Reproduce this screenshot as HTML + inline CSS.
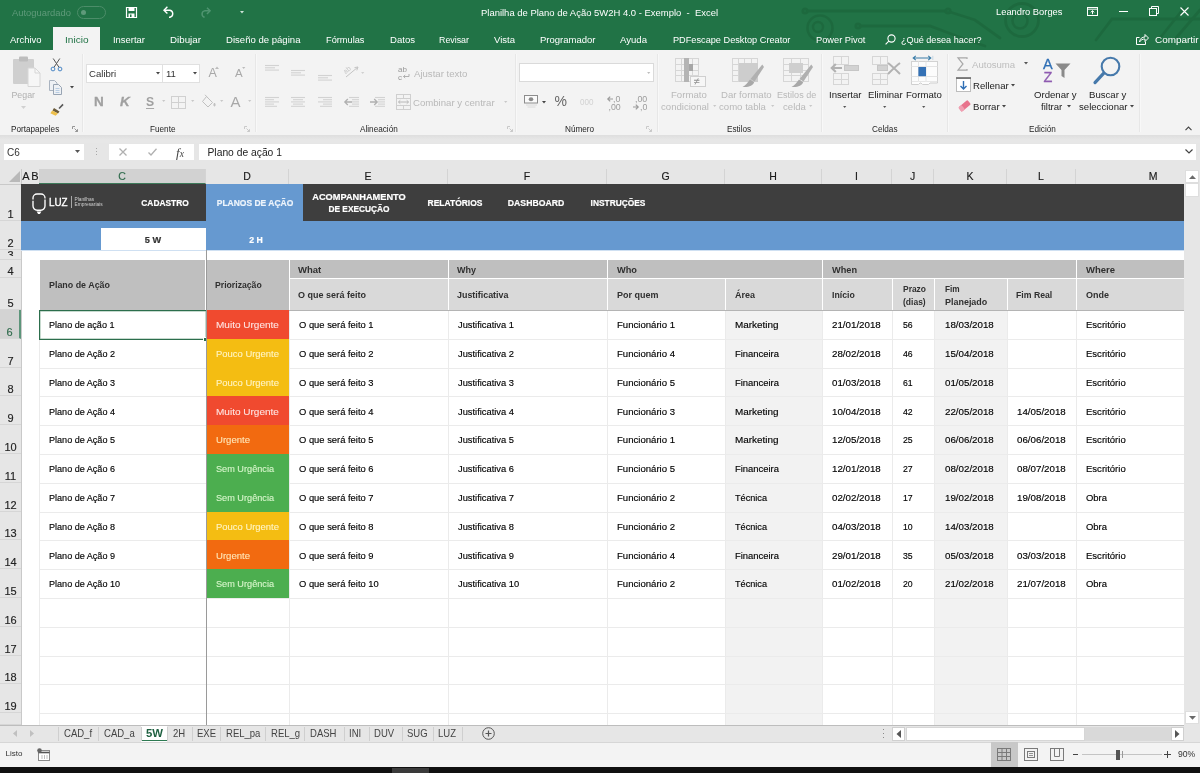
<!DOCTYPE html>
<html><head><meta charset="utf-8"><title>Excel</title>
<style>
*{box-sizing:border-box;margin:0;padding:0}
html,body{width:1200px;height:773px;overflow:hidden;background:#e6e6e6;font-family:"Liberation Sans",sans-serif;}
.a{position:absolute;white-space:nowrap;line-height:1}
svg{position:absolute;overflow:visible}
#title{left:0;top:0;width:1200px;height:50px;background:#217346}
#ribbon{left:0;top:50px;width:1200px;height:85px;background:#f3f3f3}
#shadow{left:0;top:135px;width:1200px;height:8px;background:linear-gradient(#dedede,#e7e7e7 60%)}
.rt{font-size:9.6px;color:#fff;top:35px}
.gl{font-size:8.2px;color:#262626;top:124px;margin-top:1.8px}
.rl{font-size:9.2px;color:#333}
.dis{color:#b9b9b9}
.sep{position:absolute;top:54px;width:1px;height:78px;background:#e7e7e7;box-shadow:1px 0 0 #f8f8f8}
.cell{position:absolute;font-size:9.5px;color:#000;-webkit-text-stroke:0.15px #000;white-space:nowrap;line-height:1;transform-origin:0 0}
.hb{position:absolute;font-size:9.6px;font-weight:bold;color:#303030;white-space:nowrap;line-height:1.3;transform-origin:0 0}
.ch{position:absolute;top:169px;height:15px;font-size:10.5px;color:#1a1a1a;-webkit-text-stroke:0.15px #1a1a1a;text-align:center;line-height:15px;border-right:1px solid #d4d4d4}
.rh{position:absolute;left:0;width:21px;font-size:11px;color:#222;-webkit-text-stroke:0.15px #222;text-align:center;border-bottom:1px solid #d6d6d6;line-height:1}
.nav{position:absolute;font-size:9.3px;font-weight:bold;color:#fff;-webkit-text-stroke:0.2px currentColor;white-space:nowrap;line-height:1.25;text-align:center}
.tab{position:absolute;top:728.7px;font-size:10.3px;color:#444;white-space:nowrap;line-height:1;transform-origin:0 0}
.tsep{position:absolute;top:727px;width:1px;height:14px;background:#cfcfcf}
.box{position:absolute}
</style></head><body><div id="root" style="position:absolute;left:0;top:0;width:1200px;height:773px;will-change:transform">

<div class="a" id="title"></div>
<svg style="left:0;top:0" width="1200" height="50" viewBox="0 0 1200 50" fill="none" stroke="#1d693e" stroke-width="2.8" stroke-linecap="round" opacity="0.9">
<circle cx="805" cy="11" r="2.2"/><path d="M808 11 H946"/><circle cx="948" cy="11" r="2.2"/><path d="M950 12 L975 20 L1000 38"/>
<circle cx="820" cy="28" r="12.5" stroke-width="2.6"/><circle cx="818" cy="27" r="5" stroke-width="2.4"/>
<circle cx="858" cy="26" r="2.2"/><path d="M861 26 H930 L962 38 L985 46"/>
<circle cx="1022" cy="20" r="16.5" stroke-width="2.8"/><circle cx="1020" cy="21" r="7.5" stroke-width="2.6"/>
<path d="M1096 40 L1112 19 H1200"/><path d="M1160 38 L1184 8"/><path d="M1176 38 L1200 10"/>
</svg>
<div class="a " style="left:12px;top:7.5px;font-size:9.4px;color:#5f9a7a">Autoguardado</div>
<div class="box" style="left:77px;top:6px;width:29px;height:13px;border:1px solid #4c8d69;border-radius:7px"></div>
<div class="box" style="left:81px;top:10px;width:5px;height:5px;border-radius:3px;background:#5f9a7a"></div>
<svg style="left:126px;top:7px" width="11" height="11" viewBox="0 0 11 11"><path d="M0.5 0.5 H10.5 V10.5 H0.5 Z" fill="none" stroke="#fff" stroke-width="1.2"/><rect x="2.5" y="0.5" width="6" height="3.5" fill="#fff"/><rect x="2.5" y="6.5" width="6" height="4" fill="#fff"/><rect x="4" y="7.5" width="1.5" height="2.5" fill="#217346"/></svg>
<svg style="left:163px;top:6px" width="12" height="12" viewBox="0 0 12 12" fill="none" stroke="#fff" stroke-width="1.4"><path d="M1 4.2 H7 A3.6 3.6 0 0 1 7 11.2 H6"/><path d="M4.4 0.8 L1 4.2 L4.4 7.6"/></svg>
<svg style="left:200px;top:7px" width="11" height="11" viewBox="0 0 12 12" fill="none" stroke="#4f9470" stroke-width="1.6"><path d="M11 4.2 H5 A3.6 3.6 0 0 0 5 11.2"/><path d="M7.6 0.8 L11 4.2 L7.6 7.6"/></svg>
<svg style="left:240px;top:11px" width="4" height="3" viewBox="0 0 4 3"><path d="M0 0 H4 L2 2.6 Z" fill="#cfe3d8"/></svg>
<div class="a " style="left:481px;top:8.5px;font-size:9.3px;color:#fff;transform-origin:0 0;transform:scaleX(1.017)">Planilha de Plano de Ação 5W2H 4.0 - Exemplo &nbsp;- &nbsp;Excel</div>
<div class="a " style="left:996px;top:7px;font-size:9.6px;color:#fff;transform-origin:0 0;transform:scaleX(0.973)">Leandro Borges</div>
<svg style="left:1087px;top:7px" width="11" height="9" viewBox="0 0 11 9" fill="none" stroke="#fff" stroke-width="1"><rect x="0.5" y="0.5" width="10" height="8"/><path d="M5.5 7.2 V3.8 M3.7 5.4 L5.5 3.7 L7.3 5.4" /><path d="M0.5 2.2 H10.5"/></svg>
<div class="box" style="left:1119px;top:11px;width:9px;height:1px;background:#fff;"></div>
<svg style="left:1149px;top:6px" width="10" height="10" viewBox="0 0 10 10" fill="none" stroke="#fff" stroke-width="1"><rect x="0.5" y="2.5" width="7" height="7"/><path d="M2.5 2.5 V0.5 H9.5 V7.5 H7.5"/></svg>
<svg style="left:1180px;top:7px" width="9" height="9" viewBox="0 0 9 9" fill="none" stroke="#fff" stroke-width="1.1"><path d="M0.5 0.5 L8.5 8.5 M8.5 0.5 L0.5 8.5"/></svg>
<div class="box" style="left:53px;top:27px;width:47px;height:23px;background:#f3f3f3;"></div>
<div class="a rt" style="left:10px;top:35px;transform-origin:0 0;transform:scaleX(0.984)">Archivo</div>
<div class="a rt" style="left:113px;top:35px;transform-origin:0 0;transform:scaleX(0.983)">Insertar</div>
<div class="a rt" style="left:170px;top:35px;transform-origin:0 0;transform:scaleX(1.019)">Dibujar</div>
<div class="a rt" style="left:226px;top:35px;transform-origin:0 0;transform:scaleX(0.997)">Diseño de página</div>
<div class="a rt" style="left:326px;top:35px;transform-origin:0 0;transform:scaleX(0.962)">Fórmulas</div>
<div class="a rt" style="left:389.5px;top:35px;transform-origin:0 0;transform:scaleX(0.997)">Datos</div>
<div class="a rt" style="left:439px;top:35px;transform-origin:0 0;transform:scaleX(0.922)">Revisar</div>
<div class="a rt" style="left:494px;top:35px;transform-origin:0 0;transform:scaleX(0.992)">Vista</div>
<div class="a rt" style="left:539.5px;top:35px;transform-origin:0 0;transform:scaleX(0.991)">Programador</div>
<div class="a rt" style="left:620px;top:35px;transform-origin:0 0;transform:scaleX(0.998)">Ayuda</div>
<div class="a rt" style="left:672.5px;top:35px;transform-origin:0 0;transform:scaleX(0.957)">PDFescape Desktop Creator</div>
<div class="a rt" style="left:815.5px;top:35px;transform-origin:0 0;transform:scaleX(0.966)">Power Pivot</div>
<div class="a rt" style="left:900.5px;top:35px;transform-origin:0 0;transform:scaleX(0.949)">¿Qué desea hacer?</div>
<div class="a rt" style="left:1154.5px;top:35px;transform-origin:0 0;transform:scaleX(1.032)">Compartir</div>
<div class="a " style="left:65px;top:35px;font-size:9.6px;color:#217346;transform-origin:0 0;transform:scaleX(1.049)">Inicio</div>
<svg style="left:885px;top:34px" width="11" height="11" viewBox="0 0 11 11" fill="none" stroke="#fff" stroke-width="1.1"><circle cx="6.5" cy="4.5" r="3.6"/><path d="M3.8 7.2 L0.6 10.4"/></svg>
<svg style="left:1136px;top:33px" width="13" height="12" viewBox="0 0 13 12" fill="none" stroke="#fff" stroke-width="1"><path d="M3.5 4.5 H0.5 V11.5 H9.5 V8.5"/><path d="M3.5 9 C4 5.5 6 4 9 4 V1.5 L12.5 5 L9 8.5 V6 C6.5 6 5 6.8 3.5 9 Z"/></svg>
<div class="a" id="ribbon"></div><div class="a" id="shadow"></div>
<div class="sep" style="left:82px"></div>
<div class="sep" style="left:255px"></div>
<div class="sep" style="left:515px"></div>
<div class="sep" style="left:657px"></div>
<div class="sep" style="left:821px"></div>
<div class="sep" style="left:947px"></div>
<div class="sep" style="left:1139px"></div>
<div class="a gl" style="left:11px;top:124px;">Portapapeles</div>
<div class="a gl" style="left:150px;top:124px;">Fuente</div>
<div class="a gl" style="left:360px;top:124px;">Alineación</div>
<div class="a gl" style="left:565px;top:124px;">Número</div>
<div class="a gl" style="left:727px;top:124px;">Estilos</div>
<div class="a gl" style="left:872px;top:124px;">Celdas</div>
<div class="a gl" style="left:1029px;top:124px;">Edición</div>
<svg style="left:12px;top:56px" width="29" height="31" viewBox="0 0 29 31"><rect x="1" y="3" width="21" height="25" rx="1" fill="#cfcfcf"/><rect x="7" y="0.5" width="9" height="5" rx="1" fill="#bdbdbd"/><path d="M16 12 H23 L28 17 V30.5 H16 Z" fill="#f6f6f6" stroke="#d6d6d6"/><path d="M23 12 V17 H28" fill="none" stroke="#d6d6d6"/></svg>
<div class="a rl dis" style="left:11.5px;top:91px;font-size:8.8px;color:#b0b0b0">Pegar</div>
<svg style="left:21px;top:106px" width="5" height="3" viewBox="0 0 5 3"><path d="M0 0H5L2.5 3Z" fill="#d0d0d0"/></svg>
<svg style="left:50px;top:58px" width="13" height="14" viewBox="0 0 13 14" fill="none"><path d="M3.2 0.5 L9 9.3 M9.8 0.5 L4 9.3" stroke="#555" stroke-width="1"/><circle cx="3" cy="11" r="1.9" stroke="#4a86c5" stroke-width="1"/><circle cx="10" cy="11" r="1.9" stroke="#4a86c5" stroke-width="1"/></svg>
<svg style="left:49px;top:80px" width="13" height="15" viewBox="0 0 13 15" fill="none"><path d="M0.5 0.5 H5.5 L8 3 V10.5 H0.5 Z" fill="#eef1f5" stroke="#a9b3c0"/><path d="M4.5 4.5 H9.5 L12.5 7.5 V14.5 H4.5 Z" fill="#eef1f5" stroke="#98a4b3"/><path d="M6.5 8.5H10.5M6.5 10.5H10.5M6.5 12.5H10.5" stroke="#b9cde3"/></svg>
<svg style="left:70px;top:86px" width="4" height="3" viewBox="0 0 4 3"><path d="M0 0H4L2 2.5Z" fill="#444"/></svg>
<svg style="left:50px;top:103px" width="14" height="13" viewBox="0 0 14 13"><path d="M8.5 5 L12.5 0.8 L13.6 2 L9.6 6 Z" fill="#555"/><path d="M4 5 L9.5 8.5 L8 10.5 L2.5 7.5 Z" fill="#6a5a3a"/><path d="M2.2 7.4 L8 10.6 L5.6 12.8 L0.4 10.2 Z" fill="#edbf4a"/></svg>
<svg style="left:72px;top:126px" width="6" height="6" viewBox="0 0 6 6" fill="none" stroke="#8a8a8a" stroke-width="0.9"><path d="M0.5 3V0.5H3"/><path d="M2.5 2.5L5.5 5.5M5.5 3.2V5.5H3.2"/></svg>
<div class="box" style="left:86px;top:64px;width:77px;height:19px;background:#fff;border:1px solid #e0e0e0"></div>
<div class="box" style="left:162px;top:64px;width:38px;height:19px;background:#fff;border:1px solid #e0e0e0"></div>
<div class="a " style="left:89px;top:69px;font-size:9.6px;color:#333">Calibri</div>
<div class="a " style="left:166px;top:69px;font-size:9.6px;color:#333">11</div>
<svg style="left:156px;top:72px" width="4" height="3" viewBox="0 0 4 3"><path d="M0 0H4L2 2.6Z" fill="#444"/></svg>
<svg style="left:193px;top:72px" width="4" height="3" viewBox="0 0 4 3"><path d="M0 0H4L2 2.6Z" fill="#444"/></svg>
<div class="a " style="left:208.5px;top:67px;font-size:12.5px;color:#a8a8a8">A</div>
<div class="a " style="left:235px;top:68.3px;font-size:11.5px;color:#a8a8a8">A</div>
<svg style="left:215px;top:66px" width="4" height="3" viewBox="0 0 4 3"><path d="M0 3H4L2 0.4Z" fill="#bbb"/></svg>
<svg style="left:242px;top:67px" width="3.4" height="2.4" viewBox="0 0 4 3"><path d="M0 0H4L2 2.6Z" fill="#bbb"/></svg>
<div class="a " style="left:94px;top:94.5px;font-size:13.5px;font-weight:bold;color:#a0a0a0;-webkit-text-stroke:0.3px #a0a0a0">N</div>
<div class="a " style="left:120px;top:94.5px;font-size:13.5px;font-weight:bold;font-style:italic;color:#a0a0a0;-webkit-text-stroke:0.3px #a0a0a0">K</div>
<div class="a " style="left:146px;top:94.5px;font-size:13.5px;font-weight:bold;color:#a0a0a0;border-bottom:1.5px solid #a8a8a8;padding-bottom:0px;height:14.5px;transform:scaleX(0.9);transform-origin:0 0">S</div>
<svg style="left:162px;top:100px" width="3.4" height="2.4" viewBox="0 0 4 3"><path d="M0 0H4L2 2.6Z" fill="#c8c8c8"/></svg>
<svg style="left:191px;top:100px" width="3.4" height="2.4" viewBox="0 0 4 3"><path d="M0 0H4L2 2.6Z" fill="#c8c8c8"/></svg>
<svg style="left:220px;top:100px" width="3.4" height="2.4" viewBox="0 0 4 3"><path d="M0 0H4L2 2.6Z" fill="#c8c8c8"/></svg>
<svg style="left:248px;top:100px" width="3.4" height="2.4" viewBox="0 0 4 3"><path d="M0 0H4L2 2.6Z" fill="#c8c8c8"/></svg>
<svg style="left:171px;top:96px" width="15" height="13" viewBox="0 0 15 13" fill="none" stroke="#d0d0d0"><rect x="0.5" y="0.5" width="14" height="12"/><path d="M7.5 0.5V12.5M0.5 6.5H14.5"/></svg>
<svg style="left:201px;top:94px" width="15" height="15" viewBox="0 0 15 15" fill="none" stroke="#c0c0c0"><path d="M5.5 2.5 L11.5 8.5 L7 13 L1.5 7.5 Z"/><path d="M4 0.8 L7.5 4.5"/><path d="M13.5 9 C12.5 10.8 12.8 12 13.5 12 C14.2 12 14.5 10.8 13.5 9Z" fill="#c8c8c8"/></svg>
<div class="a " style="left:230.5px;top:93.5px;font-size:15px;color:#a8a8a8">A</div>
<svg style="left:124px;top:126px" width="6" height="6" viewBox="0 0 6 6" fill="none" stroke="#c4c4c4" stroke-width="0.9" transform="translate(120 0)"><path d="M0.5 3V0.5H3"/><path d="M2.5 2.5L5.5 5.5M5.5 3.2V5.5H3.2"/></svg>
<svg style="left:265px;top:65px" width="14" height="7" viewBox="0 0 14 7" stroke="#d2d2d2" stroke-width="1.1"><path d="M0 0.5 H14"/><path d="M0 2.8 H10"/><path d="M0 5.1 H14"/></svg>
<svg style="left:291px;top:70px" width="14" height="7" viewBox="0 0 14 7" stroke="#d2d2d2" stroke-width="1.1"><path d="M0 0.5 H14"/><path d="M0 2.8 H10"/><path d="M0 5.1 H14"/></svg>
<svg style="left:318px;top:75px" width="14" height="7" viewBox="0 0 14 7" stroke="#d2d2d2" stroke-width="1.1"><path d="M0 0.5 H14"/><path d="M0 2.8 H10"/><path d="M0 5.1 H14"/></svg>
<svg style="left:344px;top:63px" width="16" height="16" viewBox="0 0 16 16" fill="none" stroke="#c4c4c4" stroke-width="1"><path d="M2 14 L14 4 M14 4 L10.5 4.6 M14 4 L12.8 7.4"/><text x="0" y="9" font-family="Liberation Sans" font-size="7" fill="#c4c4c4" stroke="none" transform="rotate(-40 4 8)">ab</text></svg>
<svg style="left:361px;top:72px" width="3.4" height="2.4" viewBox="0 0 4 3"><path d="M0 0H4L2 2.6Z" fill="#d0d0d0"/></svg>
<svg style="left:398px;top:66px" width="12" height="14" viewBox="0 0 12 14"><text x="0" y="6" font-family="Liberation Sans" font-size="8" fill="#989898">ab</text><text x="0" y="13.5" font-family="Liberation Sans" font-size="8" fill="#989898">c</text><path d="M11 8 V10.5 H5.5 M7.2 9 L5.5 10.5 L7.2 12" fill="none" stroke="#a8a8a8" stroke-width="0.9"/></svg>
<div class="a rl dis" style="left:414px;top:69px;font-size:9.6px">Ajustar texto</div>
<svg style="left:265px;top:97px" width="14" height="12" viewBox="0 0 14 12" stroke="#d2d2d2" stroke-width="1.1"><path d="M0 0.5 H14"/><path d="M0 2.7 H9"/><path d="M0 4.9 H14"/><path d="M0 7.1000000000000005 H9"/><path d="M0 9.3 H12"/></svg>
<svg style="left:291px;top:97px" width="14" height="12" viewBox="0 0 14 12" stroke="#d2d2d2" stroke-width="1.1"><path d="M0.0 0.5 H14.0"/><path d="M2.0 2.7 H12.0"/><path d="M0.0 4.9 H14.0"/><path d="M2.0 7.1000000000000005 H12.0"/><path d="M0.0 9.3 H14.0"/></svg>
<svg style="left:318px;top:97px" width="14" height="12" viewBox="0 0 14 12" stroke="#d2d2d2" stroke-width="1.1"><path d="M0 0.5 H14"/><path d="M5 2.7 H14"/><path d="M0 4.9 H14"/><path d="M5 7.1000000000000005 H14"/><path d="M2 9.3 H14"/></svg>
<svg style="left:349px;top:97px" width="10" height="12" viewBox="0 0 10 12" stroke="#d2d2d2" stroke-width="1.1"><path d="M0 0.5 H10"/><path d="M3 2.7 H10"/><path d="M3 4.9 H10"/><path d="M3 7.1000000000000005 H10"/><path d="M0 9.3 H10"/></svg>
<svg style="left:344px;top:98px" width="8" height="8" viewBox="0 0 8 8" fill="none" stroke="#b0b0b0" stroke-width="1.3"><path d="M8 4H1M3.8 1L0.8 4L3.8 7"/></svg>
<svg style="left:375px;top:97px" width="10" height="12" viewBox="0 0 10 12" stroke="#d2d2d2" stroke-width="1.1"><path d="M0 0.5 H10"/><path d="M3 2.7 H10"/><path d="M3 4.9 H10"/><path d="M3 7.1000000000000005 H10"/><path d="M0 9.3 H10"/></svg>
<svg style="left:370px;top:98px" width="8" height="8" viewBox="0 0 8 8" fill="none" stroke="#b0b0b0" stroke-width="1.3"><path d="M0 4H7M4.2 1L7.2 4L4.2 7"/></svg>
<svg style="left:396px;top:94px" width="15" height="16" viewBox="0 0 15 16" fill="none" stroke="#cfcfcf"><rect x="0.5" y="0.5" width="14" height="15"/><path d="M0.5 4.5H14.5M0.5 11.5H14.5M7.5 0.5V4.5M7.5 11.5V15.5"/><path d="M2.5 8H12.5M4.3 6.3L2.5 8L4.3 9.7M10.7 6.3L12.5 8L10.7 9.7" stroke="#b8b8b8"/></svg>
<div class="a rl dis" style="left:413px;top:98px;font-size:9.6px">Combinar y centrar</div>
<svg style="left:504px;top:101px" width="3.4" height="2.4" viewBox="0 0 4 3"><path d="M0 0H4L2 2.6Z" fill="#c8c8c8"/></svg>
<svg style="left:507px;top:126px" width="6" height="6" viewBox="0 0 6 6" fill="none" stroke="#c4c4c4" stroke-width="0.9"><path d="M0.5 3V0.5H3"/><path d="M2.5 2.5L5.5 5.5M5.5 3.2V5.5H3.2"/></svg>
<div class="box" style="left:519px;top:63px;width:135px;height:19px;background:#fff;border:1px solid #dadada"></div>
<svg style="left:647px;top:72px" width="3.4" height="2.4" viewBox="0 0 4 3"><path d="M0 0H4L2 2.6Z" fill="#bdbdbd"/></svg>
<svg style="left:524px;top:95px" width="15" height="13" viewBox="0 0 15 13"><rect x="0.5" y="0.5" width="13" height="7.5" fill="#fafafa" stroke="#8c8c8c"/><ellipse cx="7" cy="4.2" rx="2.3" ry="2" fill="#8a8a8a"/><path d="M2 10H13M3.5 12H11.5" stroke="#dadada"/></svg>
<svg style="left:542px;top:101px" width="4" height="3" viewBox="0 0 4 3"><path d="M0 0H4L2 2.6Z" fill="#444"/></svg>
<div class="a " style="left:554.5px;top:94px;font-size:14px;color:#666">%</div>
<div class="a " style="left:580px;top:97px;font-size:9.5px;color:#d2d2d2;transform:scaleX(0.85);transform-origin:0 0">000</div>
<svg style="left:607px;top:96px" width="6" height="6" viewBox="0 0 6 6" fill="none" stroke="#9c9c9c" stroke-width="1.2"><path d="M6 3H1M3.2 0.6L0.8 3L3.2 5.4"/></svg>
<div class="a " style="left:613px;top:94.5px;font-size:8.8px;color:#9c9c9c">,0</div>
<div class="a " style="left:608.5px;top:102.5px;font-size:8.8px;color:#9c9c9c">,00</div>
<div class="a " style="left:635px;top:94.5px;font-size:8.8px;color:#9c9c9c">,00</div>
<svg style="left:633px;top:104px" width="6" height="6" viewBox="0 0 6 6" fill="none" stroke="#9c9c9c" stroke-width="1.2"><path d="M0 3H5M2.8 0.6L5.2 3L2.8 5.4"/></svg>
<div class="a " style="left:640px;top:102.5px;font-size:8.8px;color:#9c9c9c">,0</div>
<svg style="left:646px;top:126px" width="6" height="6" viewBox="0 0 6 6" fill="none" stroke="#c4c4c4" stroke-width="0.9"><path d="M0.5 3V0.5H3"/><path d="M2.5 2.5L5.5 5.5M5.5 3.2V5.5H3.2"/></svg>
<svg style="left:675px;top:58px" width="24" height="24" viewBox="0 0 24 24" fill="none" stroke="#d6d6d6"><rect x="0.5" y="0.5" width="23" height="23" fill="none"/><path d="M6.5 0.5V23.5"/><path d="M12.5 0.5V23.5"/><path d="M17.5 0.5V23.5"/><path d="M0.5 6.5H23.5"/><path d="M0.5 12.5H23.5"/><path d="M0.5 17.5H23.5"/></svg>
<div class="box" style="left:684px;top:58px;width:5px;height:24px;background:#b4b4b4;"></div>
<div class="box" style="left:689px;top:64px;width:4px;height:7px;background:#a6a6a6;"></div>
<div class="box" style="left:690px;top:76px;width:16px;height:11px;background:#f6f6f6;border:1px solid #cfcfcf"></div>
<div class="a " style="left:693.5px;top:75.5px;font-size:11px;color:#8f8f8f">≠</div>
<div class="a rl dis" style="left:671px;top:90px;font-size:9.6px">Formato</div>
<div class="a rl dis" style="left:661px;top:102px;font-size:9.6px">condicional</div>
<svg style="left:713px;top:105px" width="3.4" height="2.4" viewBox="0 0 4 3"><path d="M0 0H4L2 2.6Z" fill="#c8c8c8"/></svg>
<svg style="left:732px;top:58px" width="26" height="24" viewBox="0 0 26 24" fill="none" stroke="#d6d6d6"><rect x="0.5" y="0.5" width="25" height="23" fill="none"/><path d="M6.5 0.5V23.5"/><path d="M12.5 0.5V23.5"/><path d="M19.5 0.5V23.5"/><path d="M0.5 6.5H25.5"/><path d="M0.5 12.5H25.5"/><path d="M0.5 17.5H25.5"/></svg>
<div class="box" style="left:739px;top:63px;width:19px;height:19px;background:#cdcdcd;"></div>
<svg style="left:742px;top:64px" width="22" height="24" viewBox="0 0 22 24"><path d="M20.3 0.5 L22 3 L12.5 17.5 L8.5 15 Z" fill="#b0b0b0"/><path d="M8 15.5 L12.2 18.2 C11 21.5 7 23.5 0.5 23 C4 21 5.5 19 8 15.5Z" fill="#a8a8a8"/></svg>
<div class="a rl dis" style="left:721px;top:90px;font-size:9.6px">Dar formato</div>
<div class="a rl dis" style="left:719px;top:102px;font-size:9.6px">como tabla</div>
<svg style="left:771px;top:105px" width="3.4" height="2.4" viewBox="0 0 4 3"><path d="M0 0H4L2 2.6Z" fill="#c8c8c8"/></svg>
<svg style="left:783px;top:58px" width="26" height="24" viewBox="0 0 26 24" fill="none" stroke="#d6d6d6"><rect x="0.5" y="0.5" width="25" height="23" fill="none"/><path d="M8.5 0.5V23.5"/><path d="M17.5 0.5V23.5"/><path d="M0.5 6.5H25.5"/><path d="M0.5 12.5H25.5"/><path d="M0.5 17.5H25.5"/></svg>
<div class="box" style="left:789px;top:63px;width:14px;height:10px;background:#cfcfcf;"></div>
<svg style="left:791px;top:64px" width="22" height="24" viewBox="0 0 22 24"><path d="M20.3 0.5 L22 3 L12.5 17.5 L8.5 15 Z" fill="#b0b0b0"/><path d="M8 15.5 L12.2 18.2 C11 21.5 7 23.5 0.5 23 C4 21 5.5 19 8 15.5Z" fill="#a8a8a8"/></svg>
<div class="a rl dis" style="left:777px;top:90px;font-size:9.6px;transform-origin:0 0;transform:scaleX(0.944)">Estilos de</div>
<div class="a rl dis" style="left:783px;top:102px;font-size:9.6px">celda</div>
<svg style="left:809px;top:105px" width="3.4" height="2.4" viewBox="0 0 4 3"><path d="M0 0H4L2 2.6Z" fill="#c8c8c8"/></svg>
<svg style="left:833px;top:56px" width="16" height="9" viewBox="0 0 16 9" fill="none" stroke="#d6d6d6"><rect x="0.5" y="0.5" width="15" height="8" fill="none"/><path d="M8.5 0.5V8.5"/></svg>
<svg style="left:833px;top:73px" width="16" height="12" viewBox="0 0 16 12" fill="none" stroke="#d6d6d6"><rect x="0.5" y="0.5" width="15" height="11" fill="none"/><path d="M8.5 0.5V11.5"/><path d="M0.5 6.5H15.5"/></svg>
<div class="box" style="left:844px;top:65px;width:15px;height:6px;background:#d2d2d2;border:1px solid #c6c6c6"></div>
<svg style="left:830px;top:63px" width="14" height="10" viewBox="0 0 14 10" fill="none" stroke="#b2b2b2" stroke-width="2.2"><path d="M12 5H2M5.8 1L1.8 5L5.8 9"/></svg>
<div class="a rl" style="left:829px;top:90px;font-size:9.6px;color:#222">Insertar</div>
<svg style="left:843.3px;top:106px" width="3.4" height="2.4" viewBox="0 0 4 3"><path d="M0 0H4L2 2.6Z" fill="#555"/></svg>
<svg style="left:872px;top:56px" width="16" height="9" viewBox="0 0 16 9" fill="none" stroke="#d6d6d6"><rect x="0.5" y="0.5" width="15" height="8" fill="none"/><path d="M8.5 0.5V8.5"/></svg>
<svg style="left:872px;top:73px" width="16" height="12" viewBox="0 0 16 12" fill="none" stroke="#d6d6d6"><rect x="0.5" y="0.5" width="15" height="11" fill="none"/><path d="M8.5 0.5V11.5"/><path d="M0.5 6.5H15.5"/></svg>
<div class="box" style="left:877px;top:65px;width:11px;height:6px;background:#d2d2d2;border:1px solid #c6c6c6"></div>
<svg style="left:887px;top:62px" width="14" height="13" viewBox="0 0 14 13" fill="none" stroke="#b2b2b2" stroke-width="2"><path d="M1 1C5 4 9 8 13 12M13 1C9 4 5 8 1 12"/></svg>
<div class="a rl" style="left:868px;top:90px;font-size:9.6px;color:#222">Eliminar</div>
<svg style="left:883.3px;top:106px" width="3.4" height="2.4" viewBox="0 0 4 3"><path d="M0 0H4L2 2.6Z" fill="#555"/></svg>
<svg style="left:911px;top:55px" width="28" height="31" viewBox="0 0 28 31" fill="none"><path d="M2.2 3H19.8M4.8 0.9L2.2 3L4.8 5.1M17.2 0.9L19.8 3L17.2 5.1" stroke="#3a7ca8" stroke-width="1.1"/><path d="M21.8 0.8V5" stroke="#b9cfe0" stroke-width="0.8"/><rect x="0.5" y="6.5" width="26" height="20" fill="#fcfcfc" stroke="#d2d2d2"/><path d="M7.5 6.5V26.5M15 6.5V26.5M0.5 11.5H26.5M0.5 21.5H26.5" stroke="#e4e4e4"/><rect x="7.4" y="12" width="7.6" height="9.2" fill="#3471b5"/><path d="M0.5 26.5 V29.5 H7.5 L9 28 H10 L11.5 29.5 H17.5 L19 28 H26.5 V26.5" stroke="#cfcfcf" fill="#fcfcfc"/></svg>
<div class="a rl" style="left:906px;top:90px;font-size:9.6px;color:#222">Formato</div>
<svg style="left:922.3px;top:106px" width="3.4" height="2.4" viewBox="0 0 4 3"><path d="M0 0H4L2 2.6Z" fill="#555"/></svg>
<svg style="left:957px;top:57px" width="11" height="14" viewBox="0 0 11 14" fill="none" stroke="#a8a8a8" stroke-width="1.2"><path d="M10 2V0.8H1L6 7L1 13.2H10V12"/></svg>
<div class="a rl" style="left:972px;top:59.7px;font-size:9.6px;color:#bdbdbd">Autosuma</div>
<svg style="left:1024px;top:62px" width="4" height="3" viewBox="0 0 4 3"><path d="M0 0H4L2 2.6Z" fill="#555"/></svg>
<svg style="left:956px;top:77px" width="15" height="15" viewBox="0 0 15 15" fill="none"><rect x="0.5" y="1.5" width="14" height="13" fill="#fff" stroke="#bdbdbd"/><path d="M0 1H15" stroke="#666" stroke-width="1.6"/><path d="M7.5 4V12M4.5 9L7.5 12L10.5 9" stroke="#2f6fb5" stroke-width="1.4"/></svg>
<div class="a rl" style="left:973px;top:81px;font-size:9.6px;color:#222">Rellenar</div>
<svg style="left:1011px;top:84px" width="4" height="3" viewBox="0 0 4 3"><path d="M0 0H4L2 2.6Z" fill="#444"/></svg>
<svg style="left:957px;top:99px" width="14" height="13" viewBox="0 0 14 13"><g transform="translate(1.2 8.6) rotate(-40)"><rect x="0" y="0" width="12" height="5.6" rx="1.3" fill="#e8738c"/><rect x="0" y="0" width="4.2" height="5.6" rx="1.3" fill="#f0a0b2"/></g></svg>
<div class="a rl" style="left:973px;top:102px;font-size:9.6px;color:#222">Borrar</div>
<svg style="left:1002px;top:105px" width="4" height="3" viewBox="0 0 4 3"><path d="M0 0H4L2 2.6Z" fill="#444"/></svg>
<div class="a " style="left:1043px;top:56.5px;font-size:14.5px;color:#2f6fb5;-webkit-text-stroke:0.3px #2f6fb5">A</div>
<div class="a " style="left:1043.5px;top:69.5px;font-size:14.5px;color:#8e5bb0;-webkit-text-stroke:0.3px #8e5bb0">Z</div>
<svg style="left:1055px;top:63px" width="16" height="16" viewBox="0 0 16 16"><path d="M0.5 0.5H15.5L9.5 7V15L6.5 13V7Z" fill="#8a8a8a"/></svg>
<div class="a rl" style="left:1034px;top:90px;font-size:9.6px;color:#222">Ordenar y</div>
<div class="a rl" style="left:1041px;top:102px;font-size:9.6px;color:#222">filtrar</div>
<svg style="left:1067px;top:105px" width="4" height="3" viewBox="0 0 4 3"><path d="M0 0H4L2 2.6Z" fill="#444"/></svg>
<svg style="left:1093px;top:56px" width="29" height="29" viewBox="0 0 29 29" fill="none" stroke="#4679ab"><circle cx="17.5" cy="10.5" r="8.8" stroke-width="2.1"/><path d="M10.8 17.2L2 26.6" stroke-width="3.2" stroke-linecap="round"/></svg>
<div class="a rl" style="left:1089px;top:90px;font-size:9.6px;color:#222">Buscar y</div>
<div class="a rl" style="left:1079px;top:102px;font-size:9.6px;color:#222">seleccionar</div>
<svg style="left:1130px;top:105px" width="4" height="3" viewBox="0 0 4 3"><path d="M0 0H4L2 2.6Z" fill="#444"/></svg>
<svg style="left:1185px;top:126px" width="7" height="5" viewBox="0 0 7 5" fill="none" stroke="#444" stroke-width="1.1"><path d="M0.5 4.2L3.5 1L6.5 4.2"/></svg>
<div class="box" style="left:4px;top:144px;width:80px;height:16px;background:#fff;"></div>
<div class="a " style="left:7px;top:147.5px;font-size:10px;color:#333">C6</div>
<svg style="left:75px;top:150px" width="5" height="3" viewBox="0 0 5 3"><path d="M0 0H5L2.5 3Z" fill="#555"/></svg>
<div class="box" style="left:96px;top:148px;width:1px;height:1px;background:#a8a8a8;"></div>
<div class="box" style="left:96px;top:151px;width:1px;height:1px;background:#a8a8a8;"></div>
<div class="box" style="left:96px;top:154px;width:1px;height:1px;background:#a8a8a8;"></div>
<div class="box" style="left:109px;top:144px;width:85px;height:16px;background:#fff;"></div>
<svg style="left:119px;top:148px" width="8" height="8" viewBox="0 0 8 8" fill="none" stroke="#b0b0b0" stroke-width="1.3"><path d="M0.5 0.5L7.5 7.5M7.5 0.5L0.5 7.5"/></svg>
<svg style="left:148px;top:148px" width="9" height="8" viewBox="0 0 9 8" fill="none" stroke="#b0b0b0" stroke-width="1.3"><path d="M0.5 4.5L3 7L8.5 0.8"/></svg>
<div class="a " style="left:176px;top:145.5px;font-family:'Liberation Serif',serif;font-size:13px;color:#444;font-style:italic"><i>f</i><span style="font-size:9.5px">x</span></div>
<div class="box" style="left:199px;top:144px;width:997px;height:16px;background:#fff;"></div>
<div class="a " style="left:207.5px;top:147.5px;font-size:10.3px;color:#222">Plano de ação 1</div>
<svg style="left:1185px;top:149px" width="8" height="5" viewBox="0 0 8 5" fill="none" stroke="#444" stroke-width="1.2"><path d="M0.5 0.5L4 4L7.5 0.5"/></svg>
<div class="box" style="left:0px;top:184px;width:1184px;height:541px;background:#fff;"></div>
<div class="box" style="left:0px;top:169px;width:1184px;height:15px;background:#e6e6e6;"></div>
<svg style="left:9px;top:171px" width="11" height="11" viewBox="0 0 10 10"><path d="M10 0V10H0Z" fill="#b9b9b9"/></svg>
<div class="ch" style="left:21px;width:10px;border-right:none;font-size:11px;">A</div>
<div class="ch" style="left:31px;width:8px;border-right:none;font-size:11px;">B</div>
<div class="ch" style="left:39px;width:167px;background:#d2d2d2;color:#2f6b4c;-webkit-text-stroke:0.15px #2f6b4c;border-bottom:1px solid #3d7a5a;">C</div>
<div class="ch" style="left:206px;width:83px;">D</div>
<div class="ch" style="left:289px;width:159px;">E</div>
<div class="ch" style="left:448px;width:159px;">F</div>
<div class="ch" style="left:607px;width:118px;">G</div>
<div class="ch" style="left:725px;width:97px;">H</div>
<div class="ch" style="left:822px;width:70px;">I</div>
<div class="ch" style="left:892px;width:42px;">J</div>
<div class="ch" style="left:934px;width:73px;">K</div>
<div class="ch" style="left:1007px;width:69px;">L</div>
<div class="ch" style="left:1076px;width:108px;border-right:none;padding-left:46px;">M</div>
<div class="box" style="left:0px;top:184px;width:21px;height:541px;background:#e6e6e6;"></div>
<div class="rh" style="top:184px;height:37px;padding-top:25px">1</div>
<div class="rh" style="top:221px;height:29px;padding-top:17px">2</div>
<div class="rh" style="top:250px;height:10px;"><div style="height:6px;overflow:hidden"><div style="margin-top:0px">3</div></div></div>
<div class="rh" style="top:260px;height:18px;padding-top:6px">4</div>
<div class="rh" style="top:278px;height:32px;padding-top:20px">5</div>
<div class="rh" style="top:310px;height:29px;background:#d3d3d3;color:#2f6b4c;-webkit-text-stroke:0.15px #2f6b4c;border-right:2px solid #5c957a;padding-top:17px">6</div>
<div class="rh" style="top:339px;height:29px;padding-top:17px">7</div>
<div class="rh" style="top:368px;height:28px;padding-top:16px">8</div>
<div class="rh" style="top:396px;height:29px;padding-top:17px">9</div>
<div class="rh" style="top:425px;height:29px;padding-top:17px">10</div>
<div class="rh" style="top:454px;height:29px;padding-top:17px">11</div>
<div class="rh" style="top:483px;height:29px;padding-top:17px">12</div>
<div class="rh" style="top:512px;height:28px;padding-top:16px">13</div>
<div class="rh" style="top:540px;height:29px;padding-top:17px">14</div>
<div class="rh" style="top:569px;height:29px;padding-top:17px">15</div>
<div class="rh" style="top:598px;height:29px;padding-top:17px">16</div>
<div class="rh" style="top:627px;height:29px;padding-top:17px">17</div>
<div class="rh" style="top:656px;height:28px;padding-top:16px">18</div>
<div class="rh" style="top:684px;height:29px;padding-top:17px">19</div>
<div class="rh" style="top:713px;height:12px;padding-top:0px"></div>
<div class="box" style="left:21px;top:169px;width:1px;height:556px;background:#c9c9c9;"></div>
<div class="box" style="left:0px;top:184px;width:1184px;height:1px;background:#c9c9c9;"></div>
<div class="box" style="left:725px;top:310px;width:97px;height:415px;background:#f2f2f2;"></div>
<div class="box" style="left:934px;top:310px;width:73px;height:415px;background:#f2f2f2;"></div>
<div class="box" style="left:39px;top:339px;width:1145px;height:1px;background:#ebebeb;"></div>
<div class="box" style="left:39px;top:368px;width:1145px;height:1px;background:#ebebeb;"></div>
<div class="box" style="left:39px;top:396px;width:1145px;height:1px;background:#ebebeb;"></div>
<div class="box" style="left:39px;top:425px;width:1145px;height:1px;background:#ebebeb;"></div>
<div class="box" style="left:39px;top:454px;width:1145px;height:1px;background:#ebebeb;"></div>
<div class="box" style="left:39px;top:483px;width:1145px;height:1px;background:#ebebeb;"></div>
<div class="box" style="left:39px;top:512px;width:1145px;height:1px;background:#ebebeb;"></div>
<div class="box" style="left:39px;top:540px;width:1145px;height:1px;background:#ebebeb;"></div>
<div class="box" style="left:39px;top:569px;width:1145px;height:1px;background:#ebebeb;"></div>
<div class="box" style="left:39px;top:598px;width:1145px;height:1px;background:#ebebeb;"></div>
<div class="box" style="left:39px;top:627px;width:1145px;height:1px;background:#ebebeb;"></div>
<div class="box" style="left:39px;top:656px;width:1145px;height:1px;background:#ebebeb;"></div>
<div class="box" style="left:39px;top:684px;width:1145px;height:1px;background:#ebebeb;"></div>
<div class="box" style="left:39px;top:713px;width:1145px;height:1px;background:#ebebeb;"></div>
<div class="box" style="left:39px;top:725px;width:1145px;height:1px;background:#ebebeb;"></div>
<div class="box" style="left:206px;top:310px;width:1px;height:415px;background:#ebebeb;"></div>
<div class="box" style="left:289px;top:310px;width:1px;height:415px;background:#ebebeb;"></div>
<div class="box" style="left:448px;top:310px;width:1px;height:415px;background:#ebebeb;"></div>
<div class="box" style="left:607px;top:310px;width:1px;height:415px;background:#ebebeb;"></div>
<div class="box" style="left:725px;top:310px;width:1px;height:415px;background:#ebebeb;"></div>
<div class="box" style="left:822px;top:310px;width:1px;height:415px;background:#ebebeb;"></div>
<div class="box" style="left:892px;top:310px;width:1px;height:415px;background:#ebebeb;"></div>
<div class="box" style="left:934px;top:310px;width:1px;height:415px;background:#ebebeb;"></div>
<div class="box" style="left:1007px;top:310px;width:1px;height:415px;background:#ebebeb;"></div>
<div class="box" style="left:1076px;top:310px;width:1px;height:415px;background:#ebebeb;"></div>
<div class="box" style="left:39px;top:310px;width:1px;height:415px;background:#ebebeb;"></div>
<div class="box" style="left:21px;top:184px;width:1163px;height:37px;background:#3e3e3e;"></div>
<div class="box" style="left:21px;top:221px;width:1163px;height:29px;background:#6699d0;"></div>
<div class="box" style="left:206px;top:184px;width:97px;height:66px;background:#6699d0;"></div>
<div class="box" style="left:101px;top:228px;width:105px;height:22px;background:#fff;"></div>
<div class="box" style="left:21px;top:250px;width:1163px;height:1px;background:#cfe0f2;"></div>
<svg style="left:32px;top:192.5px" width="14" height="22" viewBox="0 0 14 22" fill="none" stroke="#fff" stroke-width="1.35"><path d="M1 6.6 V5 A4 4 0 0 1 5 1 H9 A4 4 0 0 1 13 5 V5.4"/><path d="M1 7.8 V13 A4.2 4.2 0 0 0 5.2 17.2 H8.8 A4.2 4.2 0 0 0 13 13 V6.6"/><path d="M4.6 18.4 H9.4 L7.9 21 H6.1 Z" fill="#fff" stroke="none"/></svg>
<div class="a " style="left:48.6px;top:196.6px;font-size:10.6px;color:#fff;-webkit-text-stroke:0.35px #fff;transform:scaleX(0.93);transform-origin:0 0">LUZ</div>
<div class="box" style="left:71px;top:196px;width:1px;height:12px;background:#a8a8a8;"></div>
<div class="a " style="left:74.6px;top:198px;font-size:4.8px;color:#cfcfcf">Planilhas</div>
<div class="a " style="left:74.6px;top:202.8px;font-size:4.8px;color:#cfcfcf">Empresariais</div>
<div class="nav" style="left:165px;top:197px;width:200px;margin-left:-100px;font-size:9.4px;transform:scaleX(0.892);">CADASTRO</div>
<div class="nav" style="left:254.6px;top:197px;width:200px;margin-left:-100px;font-size:9.4px;transform:scaleX(0.905);color:#eef4fb">PLANOS DE AÇÃO</div>
<div class="nav" style="left:358.6px;top:190.7px;width:200px;margin-left:-100px;font-size:9.4px;transform:scaleX(0.985);">ACOMPANHAMENTO</div>
<div class="nav" style="left:358.6px;top:203.2px;width:200px;margin-left:-100px;font-size:9.4px;transform:scaleX(0.888);">DE EXECUÇÃO</div>
<div class="nav" style="left:454.5px;top:197px;width:200px;margin-left:-100px;font-size:9.4px;transform:scaleX(0.903);">RELATÓRIOS</div>
<div class="nav" style="left:536.2px;top:197px;width:200px;margin-left:-100px;font-size:9.4px;transform:scaleX(0.925);">DASHBOARD</div>
<div class="nav" style="left:618px;top:197px;width:200px;margin-left:-100px;font-size:9.4px;transform:scaleX(0.892);">INSTRUÇÕES</div>
<div class="nav" style="left:152.6px;top:234.5px;width:200px;margin-left:-100px;font-size:9px;transform:scaleX(1.016);color:#333">5 W</div>
<div class="nav" style="left:256.2px;top:234.5px;width:200px;margin-left:-100px;font-size:9px;transform:scaleX(0.964);">2 H</div>
<div class="box" style="left:40px;top:260px;width:165px;height:50px;background:#bfbfbf;"></div>
<div class="box" style="left:207px;top:260px;width:82px;height:50px;background:#bfbfbf;"></div>
<div class="box" style="left:290px;top:260px;width:158px;height:18px;background:#bfbfbf;"></div>
<div class="box" style="left:449px;top:260px;width:158px;height:18px;background:#bfbfbf;"></div>
<div class="box" style="left:608px;top:260px;width:214px;height:18px;background:#bfbfbf;"></div>
<div class="box" style="left:823px;top:260px;width:253px;height:18px;background:#bfbfbf;"></div>
<div class="box" style="left:1077px;top:260px;width:107px;height:18px;background:#bfbfbf;"></div>
<div class="box" style="left:290px;top:279px;width:158px;height:31px;background:#d9d9d9;"></div>
<div class="box" style="left:449px;top:279px;width:158px;height:31px;background:#d9d9d9;"></div>
<div class="box" style="left:608px;top:279px;width:117px;height:31px;background:#d9d9d9;"></div>
<div class="box" style="left:726px;top:279px;width:96px;height:31px;background:#d9d9d9;"></div>
<div class="box" style="left:823px;top:279px;width:69px;height:31px;background:#d9d9d9;"></div>
<div class="box" style="left:893px;top:279px;width:41px;height:31px;background:#d9d9d9;"></div>
<div class="box" style="left:935px;top:279px;width:72px;height:31px;background:#d9d9d9;"></div>
<div class="box" style="left:1008px;top:279px;width:68px;height:31px;background:#d9d9d9;"></div>
<div class="box" style="left:1077px;top:279px;width:107px;height:31px;background:#d9d9d9;"></div>
<div class="box" style="left:40px;top:310px;width:1144px;height:1px;background:#b4b4b4;"></div>
<div class="hb" style="left:49px;top:279px;transform:scaleX(0.927)">Plano de Ação</div>
<div class="hb" style="left:215px;top:279px;transform:scaleX(0.903)">Priorização</div>
<div class="hb" style="left:298px;top:264px;transform:scaleX(0.991)">What</div>
<div class="hb" style="left:457px;top:264px;transform:scaleX(0.938)">Why</div>
<div class="hb" style="left:617px;top:264px;transform:scaleX(0.962)">Who</div>
<div class="hb" style="left:832px;top:264px;transform:scaleX(0.957)">When</div>
<div class="hb" style="left:1086px;top:264px;transform:scaleX(0.988)">Where</div>
<div class="hb" style="left:298px;top:289px;transform:scaleX(0.937)">O que será feito</div>
<div class="hb" style="left:457px;top:289px;transform:scaleX(0.928)">Justificativa</div>
<div class="hb" style="left:617px;top:289px;transform:scaleX(0.937)">Por quem</div>
<div class="hb" style="left:735px;top:289px;transform:scaleX(0.937)">Área</div>
<div class="hb" style="left:832px;top:289px;transform:scaleX(0.906)">Início</div>
<div class="hb" style="left:902.5px;top:282.5px;transform:scaleX(0.88)">Prazo</div>
<div class="hb" style="left:902.5px;top:296px;transform:scaleX(0.887)">(dias)</div>
<div class="hb" style="left:944.5px;top:282.5px;transform:scaleX(0.861)">Fim</div>
<div class="hb" style="left:944.5px;top:296px;transform:scaleX(0.933)">Planejado</div>
<div class="hb" style="left:1016px;top:289px;transform:scaleX(0.907)">Fim Real</div>
<div class="hb" style="left:1086px;top:289px;transform:scaleX(0.937)">Onde</div>
<div class="box" style="left:207px;top:310px;width:82px;height:29px;background:#f04a2f;"></div>
<div class="cell" style="left:49.2px;top:320.2px;transform:scaleX(0.954);">Plano de ação 1</div>
<div class="cell" style="left:215.5px;top:320.2px;transform:scaleX(1.054);color:#fde3e0;-webkit-text-stroke:0.1px #fde3e0">Muito Urgente</div>
<div class="cell" style="left:298.5px;top:320.2px;transform:scaleX(0.987);">O que será feito 1</div>
<div class="cell" style="left:457.5px;top:320.2px;transform:scaleX(0.982);">Justificativa 1</div>
<div class="cell" style="left:617px;top:320.2px;transform:scaleX(1.008);">Funcionário 1</div>
<div class="cell" style="left:735px;top:320.2px;transform:scaleX(1.043);">Marketing</div>
<div class="cell" style="left:832.3px;top:320.2px;transform:scaleX(1.026);">21/01/2018</div>
<div class="cell" style="left:902.7px;top:320.2px;transform:scaleX(0.918);">56</div>
<div class="cell" style="left:944.7px;top:320.2px;transform:scaleX(1.026);">18/03/2018</div>
<div class="cell" style="left:1086px;top:320.2px;transform:scaleX(1.003);">Escritório</div>
<div class="box" style="left:207px;top:339px;width:82px;height:29px;background:#f4bd12;"></div>
<div class="cell" style="left:49.2px;top:349.0px;transform:scaleX(0.954);">Plano de Ação 2</div>
<div class="cell" style="left:215.5px;top:349.0px;transform:scaleX(0.994);color:#fff4c4;-webkit-text-stroke:0.1px #fff4c4">Pouco Urgente</div>
<div class="cell" style="left:298.5px;top:349.0px;transform:scaleX(0.987);">O que será feito 2</div>
<div class="cell" style="left:457.5px;top:349.0px;transform:scaleX(0.982);">Justificativa 2</div>
<div class="cell" style="left:617px;top:349.0px;transform:scaleX(1.008);">Funcionário 4</div>
<div class="cell" style="left:735px;top:349.0px;transform:scaleX(0.992);">Financeira</div>
<div class="cell" style="left:832.3px;top:349.0px;transform:scaleX(1.026);">28/02/2018</div>
<div class="cell" style="left:902.7px;top:349.0px;transform:scaleX(0.918);">46</div>
<div class="cell" style="left:944.7px;top:349.0px;transform:scaleX(1.026);">15/04/2018</div>
<div class="cell" style="left:1086px;top:349.0px;transform:scaleX(1.003);">Escritório</div>
<div class="box" style="left:207px;top:368px;width:82px;height:28px;background:#f4bd12;"></div>
<div class="cell" style="left:49.2px;top:377.8px;transform:scaleX(0.954);">Plano de Ação 3</div>
<div class="cell" style="left:215.5px;top:377.8px;transform:scaleX(0.994);color:#fff4c4;-webkit-text-stroke:0.1px #fff4c4">Pouco Urgente</div>
<div class="cell" style="left:298.5px;top:377.8px;transform:scaleX(0.987);">O que será feito 3</div>
<div class="cell" style="left:457.5px;top:377.8px;transform:scaleX(0.982);">Justificativa 3</div>
<div class="cell" style="left:617px;top:377.8px;transform:scaleX(1.008);">Funcionário 5</div>
<div class="cell" style="left:735px;top:377.8px;transform:scaleX(0.992);">Financeira</div>
<div class="cell" style="left:832.3px;top:377.8px;transform:scaleX(1.026);">01/03/2018</div>
<div class="cell" style="left:902.7px;top:377.8px;transform:scaleX(0.918);">61</div>
<div class="cell" style="left:944.7px;top:377.8px;transform:scaleX(1.026);">01/05/2018</div>
<div class="cell" style="left:1086px;top:377.8px;transform:scaleX(1.003);">Escritório</div>
<div class="box" style="left:207px;top:396px;width:82px;height:29px;background:#f04a2f;"></div>
<div class="cell" style="left:49.2px;top:406.6px;transform:scaleX(0.954);">Plano de Ação 4</div>
<div class="cell" style="left:215.5px;top:406.6px;transform:scaleX(1.054);color:#fde3e0;-webkit-text-stroke:0.1px #fde3e0">Muito Urgente</div>
<div class="cell" style="left:298.5px;top:406.6px;transform:scaleX(0.987);">O que será feito 4</div>
<div class="cell" style="left:457.5px;top:406.6px;transform:scaleX(0.982);">Justificativa 4</div>
<div class="cell" style="left:617px;top:406.6px;transform:scaleX(1.008);">Funcionário 3</div>
<div class="cell" style="left:735px;top:406.6px;transform:scaleX(1.043);">Marketing</div>
<div class="cell" style="left:832.3px;top:406.6px;transform:scaleX(1.026);">10/04/2018</div>
<div class="cell" style="left:902.7px;top:406.6px;transform:scaleX(0.918);">42</div>
<div class="cell" style="left:944.7px;top:406.6px;transform:scaleX(1.026);">22/05/2018</div>
<div class="cell" style="left:1016.5px;top:406.6px;transform:scaleX(1.026);">14/05/2018</div>
<div class="cell" style="left:1086px;top:406.6px;transform:scaleX(1.003);">Escritório</div>
<div class="box" style="left:207px;top:425px;width:82px;height:29px;background:#f26a10;"></div>
<div class="cell" style="left:49.2px;top:435.4px;transform:scaleX(0.954);">Plano de Ação 5</div>
<div class="cell" style="left:215.5px;top:435.4px;transform:scaleX(1.006);color:#ffe6b8;-webkit-text-stroke:0.1px #ffe6b8">Urgente</div>
<div class="cell" style="left:298.5px;top:435.4px;transform:scaleX(0.987);">O que será feito 5</div>
<div class="cell" style="left:457.5px;top:435.4px;transform:scaleX(0.982);">Justificativa 5</div>
<div class="cell" style="left:617px;top:435.4px;transform:scaleX(1.008);">Funcionário 1</div>
<div class="cell" style="left:735px;top:435.4px;transform:scaleX(1.043);">Marketing</div>
<div class="cell" style="left:832.3px;top:435.4px;transform:scaleX(1.026);">12/05/2018</div>
<div class="cell" style="left:902.7px;top:435.4px;transform:scaleX(0.918);">25</div>
<div class="cell" style="left:944.7px;top:435.4px;transform:scaleX(1.026);">06/06/2018</div>
<div class="cell" style="left:1016.5px;top:435.4px;transform:scaleX(1.026);">06/06/2018</div>
<div class="cell" style="left:1086px;top:435.4px;transform:scaleX(1.003);">Escritório</div>
<div class="box" style="left:207px;top:454px;width:82px;height:29px;background:#4cae4f;"></div>
<div class="cell" style="left:49.2px;top:464.2px;transform:scaleX(0.954);">Plano de Ação 6</div>
<div class="cell" style="left:215.5px;top:464.2px;transform:scaleX(0.964);color:#d8f6cc;-webkit-text-stroke:0.1px #d8f6cc">Sem Urgência</div>
<div class="cell" style="left:298.5px;top:464.2px;transform:scaleX(0.987);">O que será feito 6</div>
<div class="cell" style="left:457.5px;top:464.2px;transform:scaleX(0.982);">Justificativa 6</div>
<div class="cell" style="left:617px;top:464.2px;transform:scaleX(1.008);">Funcionário 5</div>
<div class="cell" style="left:735px;top:464.2px;transform:scaleX(0.992);">Financeira</div>
<div class="cell" style="left:832.3px;top:464.2px;transform:scaleX(1.026);">12/01/2018</div>
<div class="cell" style="left:902.7px;top:464.2px;transform:scaleX(0.918);">27</div>
<div class="cell" style="left:944.7px;top:464.2px;transform:scaleX(1.026);">08/02/2018</div>
<div class="cell" style="left:1016.5px;top:464.2px;transform:scaleX(1.026);">08/07/2018</div>
<div class="cell" style="left:1086px;top:464.2px;transform:scaleX(1.003);">Escritório</div>
<div class="box" style="left:207px;top:483px;width:82px;height:29px;background:#4cae4f;"></div>
<div class="cell" style="left:49.2px;top:493.0px;transform:scaleX(0.954);">Plano de Ação 7</div>
<div class="cell" style="left:215.5px;top:493.0px;transform:scaleX(0.964);color:#d8f6cc;-webkit-text-stroke:0.1px #d8f6cc">Sem Urgência</div>
<div class="cell" style="left:298.5px;top:493.0px;transform:scaleX(0.987);">O que será feito 7</div>
<div class="cell" style="left:457.5px;top:493.0px;transform:scaleX(0.982);">Justificativa 7</div>
<div class="cell" style="left:617px;top:493.0px;transform:scaleX(1.008);">Funcionário 2</div>
<div class="cell" style="left:735px;top:493.0px;transform:scaleX(0.962);">Técnica</div>
<div class="cell" style="left:832.3px;top:493.0px;transform:scaleX(1.026);">02/02/2018</div>
<div class="cell" style="left:902.7px;top:493.0px;transform:scaleX(0.918);">17</div>
<div class="cell" style="left:944.7px;top:493.0px;transform:scaleX(1.026);">19/02/2018</div>
<div class="cell" style="left:1016.5px;top:493.0px;transform:scaleX(1.026);">19/08/2018</div>
<div class="cell" style="left:1086px;top:493.0px;transform:scaleX(0.994);">Obra</div>
<div class="box" style="left:207px;top:512px;width:82px;height:28px;background:#f4bd12;"></div>
<div class="cell" style="left:49.2px;top:521.8px;transform:scaleX(0.954);">Plano de Ação 8</div>
<div class="cell" style="left:215.5px;top:521.8px;transform:scaleX(0.994);color:#fff4c4;-webkit-text-stroke:0.1px #fff4c4">Pouco Urgente</div>
<div class="cell" style="left:298.5px;top:521.8px;transform:scaleX(0.987);">O que será feito 8</div>
<div class="cell" style="left:457.5px;top:521.8px;transform:scaleX(0.982);">Justificativa 8</div>
<div class="cell" style="left:617px;top:521.8px;transform:scaleX(1.008);">Funcionário 2</div>
<div class="cell" style="left:735px;top:521.8px;transform:scaleX(0.962);">Técnica</div>
<div class="cell" style="left:832.3px;top:521.8px;transform:scaleX(1.026);">04/03/2018</div>
<div class="cell" style="left:902.7px;top:521.8px;transform:scaleX(0.918);">10</div>
<div class="cell" style="left:944.7px;top:521.8px;transform:scaleX(1.026);">14/03/2018</div>
<div class="cell" style="left:1086px;top:521.8px;transform:scaleX(0.994);">Obra</div>
<div class="box" style="left:207px;top:540px;width:82px;height:29px;background:#f26a10;"></div>
<div class="cell" style="left:49.2px;top:550.6px;transform:scaleX(0.954);">Plano de Ação 9</div>
<div class="cell" style="left:215.5px;top:550.6px;transform:scaleX(1.006);color:#ffe6b8;-webkit-text-stroke:0.1px #ffe6b8">Urgente</div>
<div class="cell" style="left:298.5px;top:550.6px;transform:scaleX(0.987);">O que será feito 9</div>
<div class="cell" style="left:457.5px;top:550.6px;transform:scaleX(0.982);">Justificativa 9</div>
<div class="cell" style="left:617px;top:550.6px;transform:scaleX(1.008);">Funcionário 4</div>
<div class="cell" style="left:735px;top:550.6px;transform:scaleX(0.992);">Financeira</div>
<div class="cell" style="left:832.3px;top:550.6px;transform:scaleX(1.026);">29/01/2018</div>
<div class="cell" style="left:902.7px;top:550.6px;transform:scaleX(0.918);">35</div>
<div class="cell" style="left:944.7px;top:550.6px;transform:scaleX(1.026);">05/03/2018</div>
<div class="cell" style="left:1016.5px;top:550.6px;transform:scaleX(1.026);">03/03/2018</div>
<div class="cell" style="left:1086px;top:550.6px;transform:scaleX(1.003);">Escritório</div>
<div class="box" style="left:207px;top:569px;width:82px;height:29px;background:#4cae4f;"></div>
<div class="cell" style="left:49.2px;top:579.4px;transform:scaleX(0.954);">Plano de Ação 10</div>
<div class="cell" style="left:215.5px;top:579.4px;transform:scaleX(0.964);color:#d8f6cc;-webkit-text-stroke:0.1px #d8f6cc">Sem Urgência</div>
<div class="cell" style="left:298.5px;top:579.4px;transform:scaleX(0.987);">O que será feito 10</div>
<div class="cell" style="left:457.5px;top:579.4px;transform:scaleX(0.982);">Justificativa 10</div>
<div class="cell" style="left:617px;top:579.4px;transform:scaleX(1.008);">Funcionário 2</div>
<div class="cell" style="left:735px;top:579.4px;transform:scaleX(0.962);">Técnica</div>
<div class="cell" style="left:832.3px;top:579.4px;transform:scaleX(1.026);">01/02/2018</div>
<div class="cell" style="left:902.7px;top:579.4px;transform:scaleX(0.918);">20</div>
<div class="cell" style="left:944.7px;top:579.4px;transform:scaleX(1.026);">21/02/2018</div>
<div class="cell" style="left:1016.5px;top:579.4px;transform:scaleX(1.026);">21/07/2018</div>
<div class="cell" style="left:1086px;top:579.4px;transform:scaleX(0.994);">Obra</div>
<div class="box" style="left:39px;top:310px;width:168px;height:30px;border:1px solid #2c6e4c;box-shadow:inset 0 0 0 0.5px #8fb5a0"></div>
<div class="box" style="left:203px;top:337px;width:4px;height:4px;background:#2c6e4c;border-left:1px solid #fff;border-top:1px solid #fff"></div>
<div class="box" style="left:206px;top:250px;width:1px;height:475px;background:#9a9a9a;"></div>
<div class="box" style="left:1184px;top:169px;width:16px;height:556px;background:#e6e6e6;"></div>
<div class="box" style="left:1185px;top:170px;width:14px;height:13px;background:#fff;border:1px solid #dedede"></div>
<svg style="left:1188.5px;top:174.5px" width="7" height="4" viewBox="0 0 7 4"><path d="M0 4H7L3.5 0.3Z" fill="#6a6a6a"/></svg>
<div class="box" style="left:1185px;top:183px;width:14px;height:14px;background:#fff;border:1px solid #dedede"></div>
<div class="box" style="left:1185px;top:711px;width:14px;height:13px;background:#fff;border:1px solid #dedede"></div>
<svg style="left:1188.5px;top:716px" width="7" height="4" viewBox="0 0 7 4"><path d="M0 0H7L3.5 3.7Z" fill="#6a6a6a"/></svg>
<div class="box" style="left:0px;top:725px;width:1200px;height:17px;background:#e6e6e6;"></div>
<div class="box" style="left:0px;top:725px;width:1184px;height:1px;background:#bdbdbd;"></div>
<svg style="left:13px;top:730px" width="4" height="7" viewBox="0 0 4 7"><path d="M4 0V7L0 3.5Z" fill="#c0c0c0"/></svg>
<svg style="left:30px;top:730px" width="4" height="7" viewBox="0 0 4 7"><path d="M0 0V7L4 3.5Z" fill="#c0c0c0"/></svg>
<div class="box" style="left:141px;top:726px;width:26px;height:16px;background:#fff;"></div>
<div class="box" style="left:141px;top:740px;width:26px;height:1px;background:#2d7a52;"></div>
<div class="tsep" style="left:58px"></div>
<div class="tsep" style="left:98px"></div>
<div class="tsep" style="left:141px"></div>
<div class="tsep" style="left:167px"></div>
<div class="tsep" style="left:192px"></div>
<div class="tsep" style="left:220px"></div>
<div class="tsep" style="left:265px"></div>
<div class="tsep" style="left:304px"></div>
<div class="tsep" style="left:344px"></div>
<div class="tsep" style="left:369px"></div>
<div class="tsep" style="left:402px"></div>
<div class="tsep" style="left:433px"></div>
<div class="tsep" style="left:462px"></div>
<div class="tab" style="left:64px;transform:scaleX(0.925)">CAD_f</div>
<div class="tab" style="left:104px;transform:scaleX(0.925)">CAD_a</div>
<div class="tab" style="left:173px;transform:scaleX(0.925)">2H</div>
<div class="tab" style="left:197px;transform:scaleX(0.925)">EXE</div>
<div class="tab" style="left:226px;transform:scaleX(0.925)">REL_pa</div>
<div class="tab" style="left:271px;transform:scaleX(0.925)">REL_g</div>
<div class="tab" style="left:310px;transform:scaleX(0.925)">DASH</div>
<div class="tab" style="left:349px;transform:scaleX(0.925)">INI</div>
<div class="tab" style="left:374px;transform:scaleX(0.925)">DUV</div>
<div class="tab" style="left:407px;transform:scaleX(0.925)">SUG</div>
<div class="tab" style="left:438px;transform:scaleX(0.925)">LUZ</div>
<div class="tab" style="left:145.8px;font-weight:bold;color:#1e6040;transform:scaleX(1.1)">5W</div>
<svg style="left:482px;top:727px" width="13" height="13" viewBox="0 0 13 13" fill="none" stroke="#555" stroke-width="1"><circle cx="6.5" cy="6.5" r="5.8"/><path d="M6.5 3.5V9.5M3.5 6.5H9.5" stroke-width="1.2"/></svg>
<div class="box" style="left:883px;top:729px;width:1px;height:1px;background:#8a8a8a;"></div>
<div class="box" style="left:883px;top:733px;width:1px;height:1px;background:#8a8a8a;"></div>
<div class="box" style="left:883px;top:737px;width:1px;height:1px;background:#8a8a8a;"></div>
<div class="box" style="left:892px;top:727px;width:13px;height:14px;background:#fff;border:1px solid #d0d0d0"></div>
<svg style="left:896px;top:730px" width="5" height="8" viewBox="0 0 5 8"><path d="M5 0V8L0.5 4Z" fill="#555"/></svg>
<div class="box" style="left:906px;top:727px;width:179px;height:14px;background:#fff;border:1px solid #d6d6d6"></div>
<div class="box" style="left:1085px;top:727px;width:86px;height:14px;background:#d9d9d9;"></div>
<div class="box" style="left:1171px;top:727px;width:13px;height:14px;background:#fff;border:1px solid #d0d0d0"></div>
<svg style="left:1175px;top:730px" width="5" height="8" viewBox="0 0 5 8"><path d="M0 0V8L4.5 4Z" fill="#555"/></svg>
<div class="box" style="left:0px;top:742px;width:1200px;height:25px;background:#f3f3f3;"></div>
<div class="box" style="left:0px;top:742px;width:1200px;height:1px;background:#d6d6d6;"></div>
<div class="a " style="left:5.5px;top:750px;font-size:8px;color:#333">Listo</div>
<svg style="left:37px;top:748px" width="14" height="13" viewBox="0 0 14 13" fill="none"><rect x="1.5" y="2.5" width="11" height="10" fill="#fff" stroke="#8a8a8a"/><path d="M1.5 4.5H12.5" stroke="#555" stroke-width="1.6"/><path d="M5 7V11M7.5 7V11M10 7V11" stroke="#bdbdbd"/><circle cx="2.5" cy="2.5" r="2.3" fill="#666"/></svg>
<div class="box" style="left:991px;top:742px;width:27px;height:25px;background:#c8c8c8;"></div>
<svg style="left:997px;top:748px" width="14" height="13" viewBox="0 0 14 13" fill="none" stroke="#7a7a7a"><rect x="0.5" y="0.5" width="13" height="12"/><path d="M5 0.5V12.5M9.5 0.5V12.5M0.5 4.5H13.5M0.5 8.5H13.5"/></svg>
<svg style="left:1024px;top:748px" width="14" height="13" viewBox="0 0 14 13" fill="none" stroke="#7a7a7a"><rect x="0.5" y="0.5" width="13" height="12"/><rect x="3.5" y="3.5" width="7" height="6"/><path d="M5 5.5H9M5 7.5H9" stroke-width="0.8"/></svg>
<svg style="left:1050px;top:748px" width="14" height="13" viewBox="0 0 14 13" fill="none" stroke="#7a7a7a"><rect x="0.5" y="0.5" width="13" height="12"/><path d="M4.5 0.5V8.5H9.5V0.5"/></svg>
<div class="box" style="left:1073px;top:754px;width:5px;height:1px;background:#444;"></div>
<div class="box" style="left:1082px;top:754px;width:80px;height:1px;background:#c4c4c4;"></div>
<div class="box" style="left:1116px;top:750px;width:4px;height:10px;background:#555;"></div>
<div class="box" style="left:1122px;top:751px;width:1px;height:7px;background:#9a9a9a;"></div>
<div class="box" style="left:1164px;top:754px;width:7px;height:1px;background:#444;"></div>
<div class="box" style="left:1167px;top:751px;width:1px;height:7px;background:#444;"></div>
<div class="a " style="left:1178px;top:750px;font-size:8.6px;color:#333">90%</div>
<div class="box" style="left:0px;top:767px;width:1200px;height:6px;background:#101010;"></div>
<div class="box" style="left:392px;top:768px;width:37px;height:5px;background:#3a3a3a;"></div>
</div></body></html>
